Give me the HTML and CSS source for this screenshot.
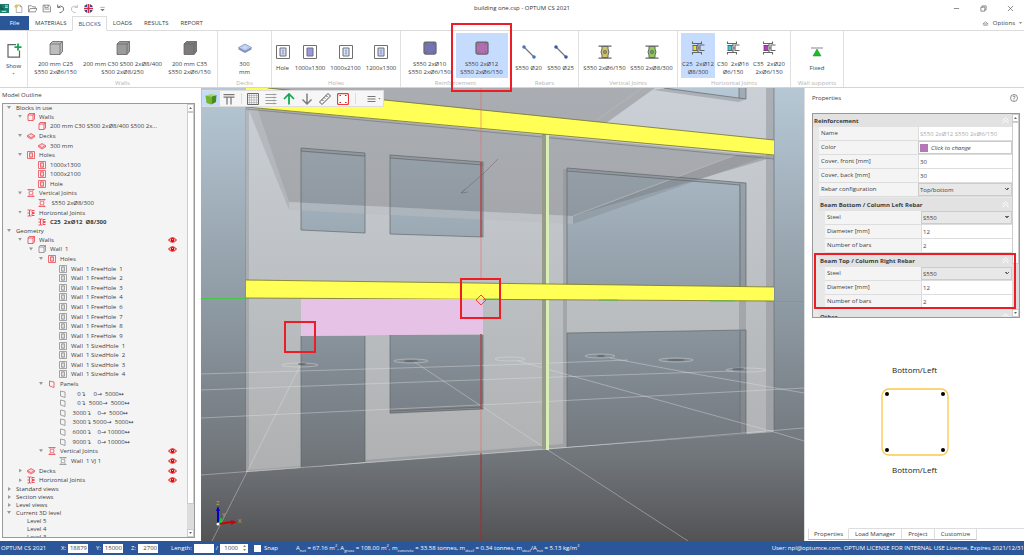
FILE: index.html
```html
<!DOCTYPE html>
<html lang="en">
<head>
<meta charset="utf-8">
<title>building one.csp - OPTUM CS 2021</title>
<link rel="stylesheet" href="styles.css">
</head>
<body>
<svg class="defs" aria-hidden="true">
  <symbol id="wall" viewBox="0 0 16 16"><path d="M2 4h10v11H2zM2 4l2-3h11v11l-3 3M12 4l3-3" fill="none" stroke="currentColor" stroke-width="1.6"/></symbol>
  <symbol id="deck" viewBox="0 0 16 16"><path d="M1 7l7-4 7 4-7 4zM1 7v3l7 4 7-4V7" fill="currentColor" fill-opacity=".3" stroke="currentColor" stroke-width="1.3"/></symbol>
  <symbol id="hole" viewBox="0 0 16 16"><path d="M1 1h14v14H1zM5 3.500h6v9H5z" fill="none" stroke="currentColor" stroke-width="1.500"/><path d="M8 4v3M8 9v3" stroke="currentColor" stroke-width="1.500"/></symbol>
  <symbol id="vj" viewBox="0 0 16 16"><path d="M1 1h14M1 15h14M4 1v3M12 1v3M4 15v-3M12 15v-3" fill="none" stroke="currentColor" stroke-width="1.500"/><circle cx="8" cy="8" r="4" fill="none" stroke="currentColor" stroke-width="1.500"/></symbol>
  <symbol id="hj" viewBox="0 0 16 16"><path d="M1 2h4v12H1M5 8H1M9 2H6M9 14H6M15 3h-5v4h5M15 9h-5v4h5" fill="none" stroke="currentColor" stroke-width="1.800"/></symbol>
  <symbol id="panel" viewBox="0 0 16 16"><path d="M3 2l9 2v11l-9-3z" fill="none" stroke="currentColor" stroke-width="1.500"/></symbol>
  <symbol id="eye" viewBox="0 0 18 12"><path d="M1 6Q9-3 17 6Q9 15 1 6z" fill="#fff" stroke="#e00000" stroke-width="2"/><circle cx="9" cy="6" r="4" fill="#e00000"/><circle cx="9" cy="5" r="1" fill="#fff"/></symbol>
  <symbol id="fold" viewBox="0 0 14 14"><path d="M1 7l6-5 6 5M1 12l6-5 6 5" fill="none" stroke="#fff" stroke-width="2"/></symbol>
  <symbol id="b-hole" viewBox="0 0 28 28"><path d="M1 1h26v26H1z" fill="#fff" stroke="#707070" stroke-width="2"/><path d="M8 6h12v16H8z" stroke="#707070" stroke-width="2"/><path d="M12 10h4l-4 8h4z" fill="none" stroke="#8aa0d8" stroke-width="1.500"/></symbol>
  <symbol id="b-wall" viewBox="0 0 28 28"><path d="M2 6l5-5h20v20l-5 6H2z" fill="#888"/><path d="M2 6h20v21H2zM2 6l5-5h20v20l-5 6M22 6l5-5" stroke="#666" stroke-width="1.500"/></symbol>
  <symbol id="b-reinf" viewBox="0 0 28 28"><rect x="2" y="2" width="24" height="24" rx="3" stroke="#666" stroke-width="2.500"/><path d="M6 6h1M21 6h1M6 22h1M21 22h1" stroke="#444" stroke-width="2"/></symbol>
  <symbol id="b-bar" viewBox="0 0 28 28"><path d="M4 4l20 20" stroke="#777" stroke-width="2.500"/><circle cx="4" cy="4" r="3.500"/><circle cx="24" cy="24" r="3.500"/></symbol>
  <symbol id="b-vj" viewBox="0 0 28 28"><path d="M1 2h26M1 26h26" stroke="#666" stroke-width="2.500"/><path d="M8 3h12v5q4 6 0 12v5H8v-5q-4-6 0-12z" stroke="#666" stroke-width="2"/><circle cx="14" cy="14" r="3.500" stroke="#666" stroke-width="1.500"/><circle cx="14" cy="14" r="1.500" fill="#444"/></symbol>
  <symbol id="b-hj" viewBox="0 0 28 28"><path d="M3 1v4h18V1M3 27v-4h18v4M3 9h12M3 19h12M14 5v18M27 8h-9v11h9M14 14h4" fill="none" stroke="#666" stroke-width="2.200"/><path d="M4 9h7v10H4z" stroke="#555" stroke-width="1.500"/></symbol>
</svg>

<div class="app">
  <header class="titlebar">
    <div class="quick">
      <button aria-label="Application"><svg viewBox="0 0 16 16"><path d="M0 0h16v16H0z" fill="#1c7f70"/><path d="M9 3h5M9 6h5M3 13h8" stroke="#a9dcd0" stroke-width="2"/><path d="M2 2v7h5" fill="none" stroke="#124f48" stroke-width="2"/></svg></button>
      <button aria-label="New"><svg viewBox="0 0 16 16"><path d="M4 2h7l3 3v10H4z" fill="#fff" stroke="#777"/><path d="M11 2v3h3" fill="none" stroke="#777"/><circle cx="4" cy="4" r="3" fill="#eebb4c"/></svg></button>
      <button aria-label="Open"><svg viewBox="0 0 16 16"><path d="M1 14V3h5l2 2h5v3M1 14l3-6h12l-3 6z" fill="none" stroke="#777" stroke-width="1.400"/></svg></button>
      <button aria-label="Save"><svg viewBox="0 0 16 16"><path d="M2 2h11l2 2v10H2zM5 2v4h6V2M4 9h9" fill="none" stroke="#777" stroke-width="1.400"/></svg></button>
      <button aria-label="Undo"><svg viewBox="0 0 16 16"><path d="M3 1v5h5M3 6q5-5 10 0q3 6-4 9H6" fill="none" stroke="#666" stroke-width="1.600"/></svg></button>
      <button aria-label="Redo"><svg viewBox="0 0 16 16"><path d="M13 1v5H8M13 6Q8 1 3 6q-3 6 4 9h3" fill="none" stroke="#bbb" stroke-width="1.600"/></svg></button>
      <button aria-label="Language"><svg viewBox="0 0 16 16"><circle cx="8" cy="8" r="8" fill="#3b4a86"/><path d="M0 8h16M8 0v16" stroke="#fff" stroke-width="5"/><path d="M0 8h16M8 0v16" stroke="#d72840" stroke-width="3"/></svg></button>
      <button aria-label="More"><svg viewBox="0 0 16 16"><path d="M4 6h8" stroke="#777"/><path d="M4 9h8l-4 4z" fill="#777"/></svg></button>
    </div>
    <h1>building one.csp - OPTUM CS 2021</h1>
    <div class="window">
      <button aria-label="Minimize"><svg viewBox="0 0 16 16"><path d="M2 8h12" stroke="#555" stroke-width="1.500"/></svg></button>
      <button aria-label="Restore"><svg viewBox="0 0 16 16"><path d="M2 5h9v9H2zM5 5V2h9v9h-3" fill="none" stroke="#555" stroke-width="1.500"/></svg></button>
      <button aria-label="Close"><svg viewBox="0 0 16 16"><path d="M2 2l12 12M14 2L2 14" stroke="#555" stroke-width="1.500"/></svg></button>
    </div>
  </header>

  <nav class="tabs">
    <button class="file">File</button>
    <button>MATERIALS</button>
    <button class="current">BLOCKS</button>
    <button>LOADS</button>
    <button>RESULTS</button>
    <button>REPORT</button>
    <span class="options"><svg viewBox="0 0 16 16"><path d="M2 9l6-5 6 5zM3 12h10" fill="none" stroke="#777" stroke-width="1.500"/></svg><button>Options</button><i class="caret"></i></span>
  </nav>

  <section class="ribbon">
    <div class="group g-show"><div class="items"><button><svg viewBox="0 0 32 32"><path d="M20 3H4v25h23V15" fill="#fff" stroke="#666" stroke-width="2.500"/><path d="M24 1v14M17 8h14" stroke="#12a650" stroke-width="3.500"/></svg>Show<i class="caret"></i></button></div></div>
    <div class="group g-walls"><div class="items">
      <button><svg fill="#bdbdbd"><use href="#b-wall"/></svg>200 mm C25<br>S550 2xØ6/150</button>
      <button><svg fill="#9b9b9b"><use href="#b-wall"/></svg>200 mm C30 S500 2xØ8/400<br>S500 2xØ8/250</button>
      <button><svg fill="#7b7b7b"><use href="#b-wall"/></svg>200 mm C35<br>S550 2xØ6/150</button></div><h2>Walls</h2></div>
    <div class="group g-decks"><div class="items"><button><svg viewBox="0 0 28 28"><path d="M1 13l13-7 13 7v4l-13 7-13-7z" fill="#8794b8"/><path d="M1 13l13-7 13 7-13 7z" fill="#c8d8f8" stroke="#6878a8"/><path d="M6 13l8-4 8 4-8 4z" fill="none" stroke="#88a0dc" stroke-dasharray="2"/></svg>300<br>mm</button></div><h2>Decks</h2></div>
    <div class="group g-holes"><div class="items">
      <button><svg fill="#d5def8"><use href="#b-hole"/></svg>Hole</button>
      <button><svg fill="#9c93ee"><use href="#b-hole"/></svg>1000x1300</button>
      <button><svg fill="#dbe6fa"><use href="#b-hole"/></svg>1000x2100</button>
      <button><svg fill="#ccd3f5"><use href="#b-hole"/></svg>1200x1300</button></div><h2>Holes</h2></div>
    <div class="group g-reinf"><div class="items">
      <button><svg fill="#7474b4"><use href="#b-reinf"/></svg>S550 2xØ10<br>S550 2xØ6/150</button>
      <button class="selected"><svg fill="#b06fb0"><use href="#b-reinf"/></svg>S550 2xØ12<br>S550 2xØ6/150<span class="marker"></span></button></div><h2>Reinforcement</h2></div>
    <div class="group g-rebars"><div class="items">
      <button><svg fill="#3f72c8"><use href="#b-bar"/></svg>S550 Ø20</button>
      <button><svg fill="#2f58b0"><use href="#b-bar"/></svg>S550 Ø25</button></div><h2>Rebars</h2></div>
    <div class="group g-vj"><div class="items">
      <button><svg fill="#cfc66c"><use href="#b-vj"/></svg>S550 2xØ6/150</button>
      <button><svg fill="#90cb60"><use href="#b-vj"/></svg>S550 2xØ8/300</button></div><h2>Vertical Joints</h2></div>
    <div class="group g-hj"><div class="items">
      <button class="selected"><svg fill="#ece428"><use href="#b-hj"/></svg>C25&nbsp; 2xØ12<br>Ø8/300</button>
      <button><svg fill="#38cbe0"><use href="#b-hj"/></svg>C30&nbsp; 2xØ16<br>Ø6/150</button>
      <button><svg fill="#c22cd0"><use href="#b-hj"/></svg>C35&nbsp; 2xØ20<br>2xØ6/150</button></div><h2>Horizontal Joints</h2></div>
    <div class="group g-support"><div class="items"><button><svg viewBox="0 0 28 28"><path d="M2 6h24" stroke="#888" stroke-width="2"/><path d="M14 8l8 14H6z" fill="#12c422" stroke="#2d7835"/></svg>Fixed</button></div><h2>Wall supports</h2></div>
  </section>

  <main>
    <aside class="outline">
      <h2>Model Outline</h2>
      <div class="treebox">
        <div class="tree">
          <ul><li class="l0"><i class="tw open"></i>Blocks in use</li></ul>
          <ul class="blocks">
            <li class="l1 red"><i class="tw open"></i><svg><use href="#wall"/></svg>Walls</li>
            <li class="l2 red"><i class="tw"></i><svg><use href="#wall"/></svg>200 mm C30 S500 2xØ8/400 S500 2x...</li>
            <li class="l1 red"><i class="tw open"></i><svg><use href="#deck"/></svg>Decks</li>
            <li class="l2 red"><i class="tw"></i><svg><use href="#deck"/></svg>300 mm</li>
            <li class="l1 red"><i class="tw open"></i><svg><use href="#hole"/></svg>Holes</li>
            <li class="l2 red"><i class="tw"></i><svg><use href="#hole"/></svg>1000x1300</li>
            <li class="l2 red"><i class="tw"></i><svg><use href="#hole"/></svg>1000x2100</li>
            <li class="l2 red"><i class="tw"></i><svg><use href="#hole"/></svg>Hole</li>
            <li class="l1 red"><i class="tw open"></i><svg><use href="#vj"/></svg>Vertical Joints</li>
            <li class="l2 red"><i class="tw"></i><svg><use href="#vj"/></svg>&nbsp;S550 2xØ8/300</li>
            <li class="l1 red"><i class="tw open"></i><svg><use href="#hj"/></svg>Horizontal Joints</li>
            <li class="l2 red strong"><i class="tw"></i><svg><use href="#hj"/></svg>C25&nbsp; 2xØ12&nbsp; Ø8/300</li>
          </ul>
          <ul><li class="l0"><i class="tw open"></i>Geometry</li></ul>
          <ul class="geometry">
            <li class="l1 red"><i class="tw open"></i><svg><use href="#wall"/></svg>Walls<svg class="eye"><use href="#eye"/></svg></li>
            <li class="l2"><i class="tw open"></i><svg><use href="#wall"/></svg>Wall&nbsp; 1<svg class="eye"><use href="#eye"/></svg></li>
            <li class="l3 red"><i class="tw open"></i><svg><use href="#hole"/></svg>Holes</li>
            <li class="l4"><i class="tw"></i><svg><use href="#hole"/></svg>Wall&nbsp; 1 FreeHole&nbsp; 1</li>
            <li class="l4"><i class="tw"></i><svg><use href="#hole"/></svg>Wall&nbsp; 1 FreeHole&nbsp; 2</li>
            <li class="l4"><i class="tw"></i><svg><use href="#hole"/></svg>Wall&nbsp; 1 FreeHole&nbsp; 3</li>
            <li class="l4"><i class="tw"></i><svg><use href="#hole"/></svg>Wall&nbsp; 1 FreeHole&nbsp; 4</li>
            <li class="l4"><i class="tw"></i><svg><use href="#hole"/></svg>Wall&nbsp; 1 FreeHole&nbsp; 6</li>
            <li class="l4"><i class="tw"></i><svg><use href="#hole"/></svg>Wall&nbsp; 1 FreeHole&nbsp; 7</li>
            <li class="l4"><i class="tw"></i><svg><use href="#hole"/></svg>Wall&nbsp; 1 FreeHole&nbsp; 8</li>
            <li class="l4"><i class="tw"></i><svg><use href="#hole"/></svg>Wall&nbsp; 1 FreeHole&nbsp; 9</li>
            <li class="l4"><i class="tw"></i><svg><use href="#hole"/></svg>Wall&nbsp; 1 SizedHole&nbsp; 1</li>
            <li class="l4"><i class="tw"></i><svg><use href="#hole"/></svg>Wall&nbsp; 1 SizedHole&nbsp; 2</li>
            <li class="l4"><i class="tw"></i><svg><use href="#hole"/></svg>Wall&nbsp; 1 SizedHole&nbsp; 3</li>
            <li class="l4"><i class="tw"></i><svg><use href="#hole"/></svg>Wall&nbsp; 1 SizedHole&nbsp; 4</li>
            <li class="l3 red"><i class="tw open"></i><svg><use href="#panel"/></svg>Panels</li>
            <li class="l4"><i class="tw"></i><svg><use href="#panel"/></svg>&nbsp; &nbsp; 0↴&nbsp; &nbsp; &nbsp;0→&nbsp; 5000↔</li>
            <li class="l4"><i class="tw"></i><svg><use href="#panel"/></svg>&nbsp; &nbsp; 0↴&nbsp; 5000→&nbsp; 5000↔</li>
            <li class="l4"><i class="tw"></i><svg><use href="#panel"/></svg>&nbsp;3000↴&nbsp; &nbsp; 0→&nbsp; 5000↔</li>
            <li class="l4"><i class="tw"></i><svg><use href="#panel"/></svg>&nbsp;3000↴ 5000→&nbsp; 5000↔</li>
            <li class="l4"><i class="tw"></i><svg><use href="#panel"/></svg>&nbsp;6000↴&nbsp; &nbsp; 0→ 10000↔</li>
            <li class="l4"><i class="tw"></i><svg><use href="#panel"/></svg>&nbsp;9000↴&nbsp; &nbsp; 0→ 10000↔</li>
            <li class="l3 red"><i class="tw open"></i><svg><use href="#vj"/></svg>Vertical Joints<svg class="eye"><use href="#eye"/></svg></li>
            <li class="l4"><i class="tw"></i><svg><use href="#vj"/></svg>Wall&nbsp; 1 VJ 1<svg class="eye"><use href="#eye"/></svg></li>
            <li class="l1 red"><i class="tw shut"></i><svg><use href="#deck"/></svg>Decks<svg class="eye"><use href="#eye"/></svg></li>
            <li class="l1 red"><i class="tw shut"></i><svg><use href="#hj"/></svg>Horizontal Joints<svg class="eye"><use href="#eye"/></svg></li>
          </ul>
          <ul>
            <li class="l0"><i class="tw shut"></i>Standard views</li>
            <li class="l0"><i class="tw shut"></i>Section views</li>
            <li class="l0"><i class="tw shut"></i>Level views</li>
            <li class="l0"><i class="tw open"></i>Current 3D level</li>
            <li class="l1"><i class="tw"></i>Level 5</li>
            <li class="l1"><i class="tw"></i>Level 4</li>
            <li class="l1"><i class="tw"></i>Level 3</li>
          </ul>
        </div>
        <div class="scroll"><button class="up" aria-label="Scroll up"></button><div class="track"><div class="thumb tall"></div></div><button class="down" aria-label="Scroll down"></button></div>
      </div>
    </aside>

    <section class="viewport">
      <svg class="scene" viewBox="201 88 603 453" preserveAspectRatio="xMidYMid slice" role="img" aria-label="3D model of the building">
        <defs>
          <linearGradient id="sky" gradientUnits="userSpaceOnUse" x1="0" y1="88" x2="0" y2="541"><stop offset="0" stop-color="#b6c8d5"/><stop offset=".52" stop-color="#8b969f"/><stop offset=".82" stop-color="#70757a"/><stop offset="1" stop-color="#535355"/></linearGradient>
          <linearGradient id="face" gradientUnits="userSpaceOnUse" x1="0" y1="88" x2="0" y2="472"><stop offset="0" stop-color="#cbd0d7"/><stop offset=".55" stop-color="#bbbfc2"/><stop offset="1" stop-color="#afb0b1"/></linearGradient>
        </defs>
        <path d="M201 88h603v453H201z" fill="url(#sky)"/>
        <path fill="url(#face)" fill-rule="evenodd" d="M246 88H774V432L246 472zM301 148L365 153V233L301 230zM390 155L483 162V237L390 234zM567 168L746 183V290H567zM301 336H365V462L301 468zM390 335H483V409L390 413zM567 333L746 330V434L567 447zM664 88H746V99z"/>
        <path d="M246 88H655L606 123L246 100z" fill="#77777a" fill-opacity=".4"/>
        <path d="M642 88L597 120" stroke="#b9bbbd" stroke-width=".7"/>
        <path d="M257 108L774 157L573 216L289 202z" fill="#77777a" fill-opacity=".38"/>
        <path d="M248 108H257L289 202V210z" fill="#8a8a8d" fill-opacity=".3"/>
        <path d="M289 202L573 216V224L289 210z" fill="#b9bcbf" fill-opacity=".5"/>
        <path d="M573 216L737 155H770L573 224z" fill="#707276" fill-opacity=".25"/>
        <path d="M573 216L735 155" stroke="#b4b7b9" stroke-width=".8"/>
        <g fill="#8b9095" fill-opacity=".5">
          <path d="M766 88h8V432l-8 1zM563 169h4V447h-4zM739 183h7V434l-7-1zM739 88h7v11l-7 3-86-12 13-2 73 10z"/>
          <path d="M301 148L365 153V157L301 152zM390 155L483 162V165L390 158zM567 168L746 183L740 185L567 171zM390 410L483 407V409L390 414zM247 470L301 466V468L247 472zM365 460L563 444V447L365 463z"/>
        </g>
        <g fill="none" stroke="#5d6164" stroke-width=".8">
          <path d="M301 148L365 153V233L301 230zM301 151L365 156M390 155L483 162V237L390 234zM390 158L483 165M567 290V168L746 183V290M567 171L740 185V290M301 468V336M365 336V462M390 413V335M483 335V409L390 413M390 411L483 407M567 447V333L746 330V434M740 331V433M664 88L746 99V88M739 88V98" stroke-opacity=".8"/>
          <path d="M246 106V472M248 108V470" stroke-opacity=".5"/>
          <path d="M774 88V432" stroke-opacity=".7"/>
          <path d="M246 109L774 159M461 193L483 174L498 159M461 193l7-1M461 193l4-4" stroke-opacity=".6"/>
        </g>
        <g fill="none" stroke="#e0e3e4" stroke-opacity=".5" stroke-width=".8">
          <path d="M201 374L500 365L628 360M201 390L500 379L733 371M201 418L500 404L804 388M201 475L548 449L804 428"/>
          <path d="M212 541L247 472L300 366M413 361L548 450L688 541M518 361L644 396L774 432L804 441M610 358L690 373L804 393"/>
          <ellipse cx="300" cy="365" rx="18" ry="2"/><ellipse cx="411" cy="361" rx="17" ry="2"/><ellipse cx="510" cy="359" rx="15" ry="2"/><ellipse cx="600" cy="356" rx="15" ry="2"/><ellipse cx="676" cy="360" rx="17" ry="2"/><ellipse cx="746" cy="370" rx="20" ry="2"/>
        </g>
        <g fill="#5d5d5f" fill-opacity=".7"><ellipse cx="302" cy="364" rx="4" ry="1"/><ellipse cx="411" cy="361" rx="7" ry="1"/><ellipse cx="601" cy="356" rx="4" ry="1"/><ellipse cx="676" cy="360" rx="9" ry="1"/><ellipse cx="738" cy="369" rx="6" ry="1"/></g>
        <path d="M542 134h4V449h-4z" fill="#989b8b"/>
        <path d="M546 133h3V450h-3z" fill="#d8f0b6"/>
        <path d="M201 298.500H246M774 301.500H804" stroke="#42c848"/>
        <g fill="#ffff55">
          <path d="M246 86L774 140V155L246 107z"/>
          <path d="M246 280L774 287V301L246 298z"/>
        </g>
        <path d="M268 88L774 140M246 107L774 155M246 280L774 287M246 298L774 301" stroke="#74742a" stroke-width=".8"/>
        <path d="M599 300L618 300M485 299L500 299M710 301L735 301" stroke="#42c848" stroke-width=".8"/>
        <path d="M301 299H483V334L301 336z" fill="#e6c2e6"/>
        <path d="M481 88V280M481 409V453" stroke="#f06464" stroke-opacity=".75" stroke-width=".8"/>
        <path d="M481 162V237M481 334V409" stroke="#a84a4a" stroke-width="1.500"/>
        <path d="M481 453V541" stroke="#a02e30"/>
        <path d="M476 300l5-5 5 5-5 5z" fill="none" stroke="#f04430"/>
        <path d="M218 524V510" stroke="#0000c8" stroke-width="2"/><path d="M216 511l2-5 2 5z" fill="#0000c8"/>
        <path d="M218 524L232 522" stroke="#d00000" stroke-width="2"/><path d="M231 520l6 2-6 3z" fill="#d00000"/>
        <path d="M219 523l2-5 1 4z" fill="#10d020" stroke="#10d020"/><circle cx="218" cy="524" r="1.500" fill="#fff"/>
        <g class="axis"><text x="216" y="505">Z</text><text x="222" y="517">Y</text><text x="238" y="523">X</text></g>
        <g fill="none" stroke="#ee1c24" stroke-width="2"><path d="M461 279h39v39h-39zM285 322h30v30h-30z"/></g>
      </svg>
      <div class="viewbar">
        <button class="selected" aria-label="3D view"><svg viewBox="0 0 24 24"><path d="M1 5l12 2v16L3 20z" fill="#74b52a"/><path d="M13 7l10-3-1 14-9 5z" fill="#4a8a1c"/><path d="M1 5l11-3 11 2-10 3z" fill="#a3dc50"/></svg></button>
        <button aria-label="Section"><svg viewBox="0 0 24 24"><path d="M1 3h22M1 8h22M8 8v15M16 8v15" fill="none" stroke="#777" stroke-width="2.500"/></svg></button>
        <i class="sep"></i>
        <button aria-label="Grid"><svg viewBox="0 0 24 24"><path d="M1 1h22v22H1z" fill="none" stroke="#666" stroke-width="2"/><path d="M5 1v22M9 1v22M14 1v22M19 1v22M1 5h22M1 9h22M1 14h22M1 19h22" stroke="#999" stroke-width="1"/></svg></button>
        <button aria-label="Levels"><svg viewBox="0 0 24 24"><path d="M1 3h22M1 9h22M1 15h22M1 21h22" stroke="#888" stroke-width="1.600"/><path d="M18 1v22" stroke="#888" stroke-dasharray="4 2"/></svg></button>
        <button aria-label="Level up"><svg viewBox="0 0 24 24"><path d="M12 23V2M2 12L12 2l10 10" fill="none" stroke="#12a650" stroke-width="3.500"/></svg></button>
        <button aria-label="Level down"><svg viewBox="0 0 24 24"><path d="M12 1v21M3 13l9 9 9-9" fill="none" stroke="#777" stroke-width="2.800"/></svg></button>
        <button aria-label="Measure"><svg viewBox="0 0 24 24"><path d="M1 18L18 1l5 5L6 23zM6 13l3 3M10 9l2 2M14 5l3 3" fill="none" stroke="#555" stroke-width="2"/></svg></button>
        <button aria-label="Reinforcement frame"><svg viewBox="0 0 24 24"><rect x="1" y="1" width="22" height="22" rx="3" fill="#fff" stroke="#ee3a3a" stroke-width="2.500"/><path d="M5 5h3M16 5h3M5 19h3M16 19h3" stroke="#c22" stroke-width="2"/></svg></button>
        <i class="sep"></i>
        <button class="more" aria-label="Menu"><svg viewBox="0 0 24 24"><path d="M3 7h16M3 12h16M3 17h16" stroke="#777" stroke-width="2"/></svg><i class="caret"></i></button>
      </div>
    </section>

    <aside class="props">
      <div class="prophead"><h2>Properties</h2><button aria-label="Help"><svg viewBox="0 0 16 16"><circle cx="8" cy="8" r="7" fill="none" stroke="#555" stroke-width="1.300"/><path d="M6 6q0-2 2-2t2 2q0 1-2 3v1M8 11v2" fill="none" stroke="#555" stroke-width="1.300"/></svg></button></div>
      <div class="propbox">
        <form class="fields">
          <h3>Reinforcement<svg class="fold"><use href="#fold"/></svg></h3>
          <div class="sub">
            <div class="row"><label for="name">Name</label><input id="name" class="dim" value="S550 2xØ12 S550 2xØ6/150" disabled></div>
            <div class="row"><label for="color">Color</label><button type="button" id="color" class="pick"><i class="swatch"></i>Click to change</button></div>
            <div class="row"><label for="cf">Cover, front [mm]</label><input id="cf" value="30"></div>
            <div class="row"><label for="cb">Cover, back [mm]</label><input id="cb" value="30"></div>
            <div class="row"><label for="rc">Rebar configuration</label><select id="rc"><option>Top/bottom</option></select></div>
            <section class="card">
              <h3>Beam Bottom / Column Left Rebar<svg class="fold"><use href="#fold"/></svg></h3>
              <div class="sub">
                <div class="row"><label for="s1">Steel</label><select id="s1"><option>S550</option></select></div>
                <div class="row"><label for="d1">Diameter [mm]</label><input id="d1" value="12"></div>
                <div class="row"><label for="n1">Number of bars</label><input id="n1" value="2"></div>
              </div>
            </section>
            <section class="card marked">
              <h3>Beam Top / Column Right Rebar<svg class="fold"><use href="#fold"/></svg></h3>
              <div class="sub">
                <div class="row"><label for="s2">Steel</label><select id="s2"><option>S550</option></select></div>
                <div class="row"><label for="d2">Diameter [mm]</label><input id="d2" value="12"></div>
                <div class="row"><label for="n2">Number of bars</label><input id="n2" value="2"></div>
              </div>
            </section>
            <section class="card"><h3>Other<svg class="fold"><use href="#fold"/></svg></h3></section>
          </div>
        </form>
        <div class="scroll"><button class="up" aria-label="Scroll up"></button><div class="track"><div class="thumb"></div></div><button class="down" aria-label="Scroll down"></button></div>
      </div>
      <div class="diagram">
        <span class="top">Bottom/Left</span>
        <svg viewBox="0 0 68 68"><rect x="1" y="1" width="66" height="66" rx="7" fill="#fff" stroke="#fcc84e" stroke-width="1.300"/><circle cx="6" cy="6" r="2"/><circle cx="62" cy="6" r="2"/><circle cx="6" cy="62" r="2"/><circle cx="62" cy="62" r="2"/></svg>
        <span>Bottom/Left</span>
      </div>
      <nav class="sheets"><button class="current">Properties</button><button>Load Manager</button><button>Project</button><button>Customize</button></nav>
    </aside>
  </main>

  <footer>
    <span class="product">OPTUM CS 2021</span>
    <label>X: <input value="18879"></label>
    <label>Y: <input value="15000"></label>
    <label>Z: <input value="2700"></label>
    <label class="length">Length: <input value=""></label>
    <label class="scale">/ <input value="1000"><i class="spin"></i></label>
    <label class="snap"><input type="checkbox"> Snap</label>
    <span class="totals">A<sub>net</sub> = 67.16 m<sup>2</sup>, A<sub>gross</sub> = 108.00 m<sup>2</sup>, m<sub>concrete</sub> = 33.58 tonnes, m<sub>steel</sub> = 0.34 tonnes, m<sub>steel</sub>/A<sub>net</sub> = 5.13 kg/m<sup>2</sup></span>
    <span class="user">User: npl@optumce.com, OPTUM LICENSE FOR INTERNAL USE License, Expires 2021/12/31</span>
  </footer>
</div>
</body>
</html>
```
FILE: styles.css
```css
* { box-sizing: border-box; }
body { margin: 0; background: #fff; color: #3c3c3c; font: 6px/8px "Open Sans", "Noto Sans", "DejaVu Sans", sans-serif; }
button, input, select { margin: 0; padding: 0; border: 0; background: none; color: inherit; font: inherit; }
h1, h2, h3 { margin: 0; font-size: 6px; font-weight: 400; }
ul { margin: 0; padding: 0; list-style: none; }
svg { display: block; flex: none; }
.defs { position: absolute; width: 0; height: 0; }
.app { display: grid; grid-template-rows: 16px 15px 57px minmax(0, 1fr) 14px; height: 100vh; overflow: hidden; }
.caret { width: 3px; height: 2px; background: #888; clip-path: polygon(0 0, 100% 0, 50% 100%); }

.titlebar { display: grid; grid-template-columns: 1fr auto 1fr; align-items: center; }
.titlebar h1 { padding-left: 20px; color: #333; line-height: 16px; }
.quick { display: flex; gap: 5px; }
.quick svg { width: 9px; height: 9px; }
.window { display: flex; justify-content: flex-end; gap: 20px; padding-right: 10px; }
.window svg { width: 7px; height: 7px; }

.tabs { display: flex; border-bottom: 1px solid #dcdcdc; }
.tabs > button { padding: 0 6px; }
.tabs .file { width: 29px; background: #2b579a; color: #fff; }
.tabs .current { margin-bottom: -1px; padding: 0 5px; border: 1px solid #dcdcdc; border-bottom-color: #fff; background: #fff; color: #2b579a; }
.options { display: flex; align-items: center; gap: 4px; margin-left: auto; padding-right: 2px; }
.options svg { width: 7px; height: 7px; }

.ribbon { display: flex; border-bottom: 1px solid #d4d4d4; }
.group { display: grid; grid-template-rows: 45px 8px; padding-top: 2px; border-right: 1px solid #e0e0e0; }
.group h2 { color: #b4b4b4; line-height: 10px; text-align: center; }
.items { display: grid; justify-content: center; }
.items button { position: relative; display: block; padding-top: 6px; white-space: nowrap; text-align: center; line-height: 8px; }
.items svg { width: 14px; height: 14px; margin: 0 auto 5px; }
.items .caret { display: block; margin: 3px auto 0; }
.g-show { width: 28px; }
.g-show .items svg { width: 16px; height: 16px; margin-bottom: 3px; }
.g-walls { width: 190px; }
.g-walls .items { grid-template-columns: 48px 86px 48px; }
.g-decks { width: 54px; }
.g-holes { width: 129px; }
.g-holes .items { grid-template-columns: 19px 36px 35px 36px; }
.g-reinf { width: 110px; }
.g-reinf .items { grid-template-columns: 52px 52px; }
.g-rebars { width: 68px; }
.g-rebars .items { grid-template-columns: 32px 32px; }
.g-vj { width: 99px; }
.g-vj .items { grid-template-columns: 47px 47px; }
.g-hj { width: 113px; }
.g-hj .items { grid-template-columns: 34px 36px 36px; }
.g-support { width: 53px; }
.items .selected { background: #c5dcff; }
.marker { position: absolute; z-index: 3; inset: -10px -4px -14px -5px; border: 2px solid #ee1c24; }

main { display: grid; grid-template-columns: 201px minmax(0, 1fr) 220px; min-height: 0; }
.outline { display: flex; flex-direction: column; min-height: 0; padding: 0 6px 3px 2px; }
.outline > h2 { flex: none; line-height: 14px; }
.treebox { flex: 1; display: flex; min-height: 0; border: 1px solid #999; margin-top: 1px; background: #f4f4f4; }
.tree { flex: 1; min-width: 0; overflow: hidden; }
.tree ul { display: grid; grid-auto-rows: 8px; }
.tree .blocks { grid-auto-rows: 1fr; height: 115px; }
.tree .geometry { grid-auto-rows: 1fr; height: 250px; }
.tree li { display: flex; align-items: center; white-space: nowrap; }
.tree li svg { width: 8px; height: 8px; margin-right: 4px; color: #888; }
.tree .red svg { color: #e8404c; }
.tree li .eye { width: 9px; height: 6px; margin: 0 10px 0 auto; }
.tw { flex: none; width: 8px; height: 4px; margin-right: 3px; }
.tw.open { background: #999; clip-path: polygon(25% 0, 75% 0, 50% 75%); }
.tw.shut { background: #999; clip-path: polygon(38% 0, 38% 100%, 75% 50%); }
.l0 { padding-left: 2px; }
.l1 { padding-left: 13px; }
.l2 { padding-left: 24px; }
.l3 { padding-left: 34px; }
.l4 { padding-left: 45px; }
.strong { font-weight: 700; }

.scroll { flex: none; display: flex; flex-direction: column; width: 7px; background: #dcdcdc; }
.scroll button { height: 8px; border: 1px solid #ccc; background: #fff; }
.scroll button::after { content: ""; display: block; width: 3px; height: 2px; margin: auto; background: #666; clip-path: polygon(50% 0, 100% 100%, 0 100%); }
.scroll .down::after { clip-path: polygon(0 0, 100% 0, 50% 100%); }
.track { flex: 1; }
.thumb { height: 76%; border: 1px solid #ccc; background: #fff; }
.thumb.tall { height: 94%; }

.viewport { position: relative; min-width: 0; min-height: 0; overflow: hidden; }
.scene { width: 100%; height: 100%; }
.axis { fill: #c8a43a; font-size: 6px; }
.viewbar { position: absolute; left: 1px; top: 2px; display: flex; align-items: center; height: 17px; background: #f6f6f6; border: 1px solid #ddd; border-left: 0; }
.viewbar button { display: flex; align-items: center; justify-content: center; width: 18px; height: 15px; }
.viewbar svg { width: 12px; height: 12px; }
.viewbar .selected { background: #c5dcff; }
.viewbar .more { width: 25px; padding-left: 6px; }
.sep { width: 1px; height: 11px; margin: 0 2px 0 3px; background: #ddd; }

.props { display: flex; flex-direction: column; min-width: 0; min-height: 0; border-left: 1px solid #ddd; }
.prophead { display: flex; justify-content: space-between; align-items: center; height: 20px; padding: 0 6px 0 7px; }
.prophead svg { width: 8px; height: 8px; }
.propbox { display: flex; height: 205px; margin: 5px 4px 0 7px; border: 1px solid #999; background: #f4f4f4; }
.fields { flex: 1; min-width: 0; overflow-x: visible; overflow-y: clip; }
.fields h3 { display: flex; align-items: center; justify-content: space-between; height: 13px; padding: 0 3px 0 1px; background: #e2e2e2; font-weight: 700; }
.fold { width: 7px; height: 7px; }
.sub { padding-left: 6px; background: #e8e8e8; }
.row { display: grid; grid-template-columns: 99px minmax(0, 1fr); height: 14px; border-bottom: 1px solid #ddd; background: #f4f4f4; }
.card .row { grid-template-columns: 96px minmax(0, 1fr); }
.row label { padding-left: 2px; line-height: 12px; }
.row input { min-width: 0; padding-left: 1px; border-left: 1px solid #ddd; background: #fff; line-height: 12px; }
.row .dim { color: #aaa; }
.row select { min-width: 0; padding-left: 1px; border: 1px solid #ccc; appearance: none; background: linear-gradient(45deg, transparent 50%, #666 50% 80%, transparent 80%) right 4px center / 2px 3px no-repeat, linear-gradient(-45deg, transparent 50%, #666 50% 80%, transparent 80%) right 2px center / 2px 3px no-repeat, #e8e8e8; }
.pick { display: flex; align-items: center; gap: 3px; padding-left: 1px; border: 1px solid #ccc; background: #fff; font-style: italic; }
.swatch { width: 8px; height: 8px; background: #b478b4; }
.card { position: relative; margin-top: 1px; }
.marked::after { content: ""; position: absolute; z-index: 2; inset: -1px -4px 0 -5px; border: 2px solid #ee1c24; pointer-events: none; }
.diagram { flex: 1; display: flex; flex-direction: column; align-items: center; justify-content: center; gap: 9px; padding-bottom: 7px; color: #222; font-size: 8px; line-height: 10px; }
.diagram .top { margin-bottom: 4px; }
.diagram svg { width: 68px; height: 68px; }
.sheets { display: flex; flex: none; height: 12px; padding-left: 3px; margin-bottom: 1px; }
.sheets::after { content: ""; flex: 1; border-top: 1px solid #ddd; }
.sheets button { padding: 0 6px; border: 1px solid #ddd; border-left: 0; border-bottom-color: #bbb; }
.sheets .current { padding: 0 5px; border-left: 1px solid #ddd; border-top-color: #fff; }

footer { display: flex; align-items: center; overflow: hidden; background: #2b579a; color: #fff; white-space: nowrap; }
footer label { display: flex; align-items: center; gap: 2px; margin-right: 8px; }
footer input { width: 20px; height: 9px; background: #fff; color: #444; text-align: right; padding-right: 1px; }
.product { width: 61px; padding-left: 1px; }
footer .length { margin: 0 2px 0 5px; }
footer .scale input { width: 28px; padding-right: 10px; }
.spin { width: 3px; height: 6px; margin-left: -7px; background: linear-gradient(#888 33%, #fff 33% 67%, #888 67%); clip-path: polygon(50% 0, 100% 33%, 100% 67%, 50% 100%, 0 67%, 0 33%); }
footer .snap input { appearance: none; width: 7px; height: 7px; padding: 0; margin-right: 1px; }
footer sub, footer sup { font-size: 4px; line-height: 0; }
.totals { margin-left: 10px; }
.user { margin-left: auto; }
```
